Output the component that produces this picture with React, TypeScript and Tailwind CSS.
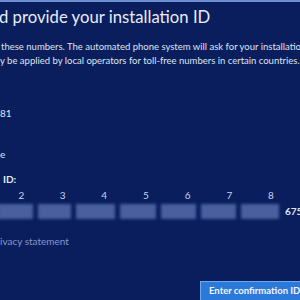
const groups = [2, 3, 4, 5, 6, 7, 8];

const boxes = [
  "w-[35px]",
  "w-[33px]",
  "w-[39px]",
  "w-[36px]",
  "w-[35px]",
  "w-[35px]",
  "w-[38px]",
];

export default function App() {
  return (
    <div className="w-[300px] h-[300px] overflow-hidden bg-[#0a1e5e] text-[#e4e8f2] font-['Lato',sans-serif] flex flex-col relative">
      <div className="h-[2px] bg-[#6f8fd0]" />
      <h1 className="mt-[3px] ml-[-1px] text-[16.7px] leading-[24px] whitespace-nowrap text-[#e8ecf5]">
        d provide your installation ID
      </h1>
      <div className="mt-[11px] text-[9.5px] leading-[14px] whitespace-nowrap text-[#dfe4ef]">
        <p className="ml-[1px]">these numbers. The automated phone system will ask for your installation ID.</p>
        <p>y be applied by local operators for toll-free numbers in certain countries.</p>
      </div>
      <div className="mt-[38px] text-[10px] leading-[14px] text-[#dfe4ef]">81</div>
      <div className="mt-[27px] text-[10px] leading-[14px] text-[#dfe4ef]">e</div>
      <div className="mt-[11px] ml-[3px] text-[10px] leading-[14px] font-bold text-[#e4e8f2]">ID:</div>
      <div className="mt-[2px] flex text-[10px] leading-[14px] text-[#c9d2ea]">
        {groups.map((g) => (
          <span key={g} className="w-[41.7px] text-center shrink-0 first:pl-[1px]">
            {g}
          </span>
        ))}
      </div>
      <div className="mt-[1px] flex items-center h-[16px]">
        <div className="flex gap-[5px] ml-[-2px]">
          {boxes.map((w, i) => (
            <div key={i} className={`${w} h-[15px] bg-[#4a5f9e] blur-[1.5px] shrink-0`} />
          ))}
        </div>
        <span className="ml-[6px] text-[10px] font-bold text-[#dfe4ef]">6753</span>
      </div>
      <div className="mt-[15px] text-[10px] leading-[14px] text-[#8596cc]">ivacy statement</div>
      <div className="mt-auto flex justify-end">
        <button className="w-[100px] h-[19px] ml-auto bg-[#2b7ad9] border border-[#6aa8f0] border-r-0 border-b-0 text-[#f2f6fc] text-[9.5px] font-bold text-left pl-[8px] whitespace-nowrap overflow-hidden">
          Enter confirmation ID
        </button>
      </div>
    </div>
  );
}
